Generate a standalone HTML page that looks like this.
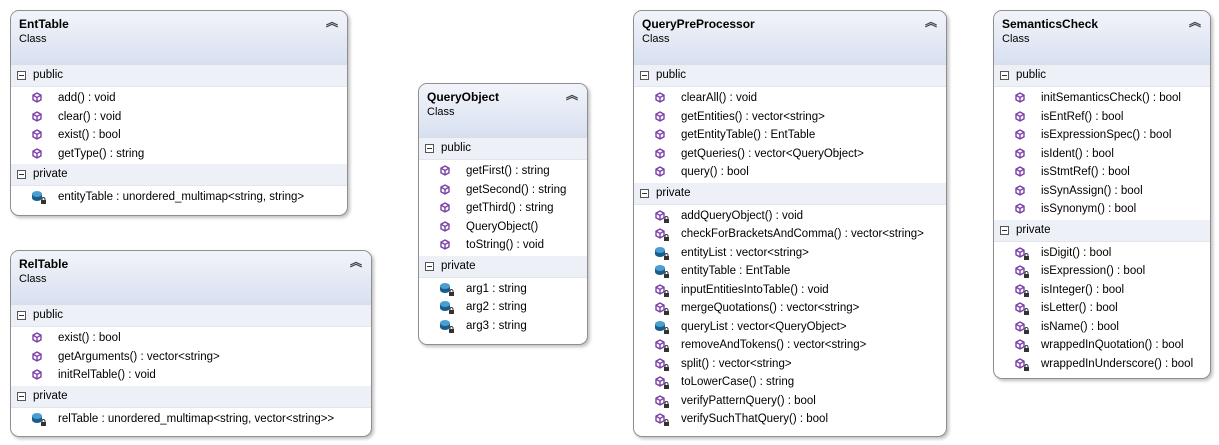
<!DOCTYPE html><html><head><meta charset="utf-8"><style>
body{margin:0;width:1219px;height:445px;background:#fff;position:relative;overflow:hidden;font-family:"Liberation Sans",sans-serif;font-size:11.5px;color:#000}
.b{position:absolute;border:1px solid #8f8f8f;border-radius:9px;background:#fff;box-shadow:2px 2px 3px rgba(0,0,0,.25);overflow:hidden}
.h{height:53px;background:linear-gradient(#f2f4fa,#d8e0f0);border-bottom:1px solid #d8dde8;position:relative}
.t{position:absolute;left:8px;top:6px;font-weight:bold;font-size:12px}
.c{position:absolute;left:8px;top:22px;font-size:11px}
.ch{position:absolute;right:9px;top:2px;font-size:12px;color:#444;font-weight:bold}
.s{height:21px;line-height:21px;background:#edf0f7;border-bottom:1px solid #e2e5ec;padding-left:22px;position:relative}
.s:before{content:"";position:absolute;left:6px;top:6px;width:7px;height:7px;border:1px solid #555;background:#fff}
.s:after{content:"";position:absolute;left:8px;top:10px;width:5px;height:1px;background:#333}
.l{padding:2px 0 1px}
.r{height:18.5px;line-height:18.5px;padding-left:47px;position:relative;white-space:nowrap}
.r svg{position:absolute;left:20px;top:2px}
</style></head><body>
<svg width="0" height="0" style="position:absolute"><defs>
<g id="m"><path d="M6 2L10 4.2v4.6L6 11 2 8.8V4.2z M2 4.2L6 6.5 10 4.2 M6 6.5V11" fill="none" stroke="#7b3fa8" stroke-width="1.4"/></g>
<g id="f"><ellipse cx="6" cy="8" rx="5" ry="3" fill="#1a5d8c"/><rect x="1" y="4" width="10" height="4" fill="#1a5d8c"/><ellipse cx="6" cy="4" rx="5" ry="3" fill="#4a9ed0"/></g>
<g id="k"><rect x="10" y="10" width="5" height="4" fill="#333"/><path d="M11 10.5v-1.5a1.5 1.5 0 0 1 3 0v1.5" fill="none" stroke="#333"/></g>
</defs></svg>

<div class="b" style="left:10px;top:10px;width:336px;height:204px">
<div class="h"><div class="t">EntTable</div><div class="c">Class</div><div class="ch">︽</div></div>
<div class="s">public</div><div class="l">
<div class="r"><svg width="16" height="15"><use href="#m"/></svg>add() : void</div>
<div class="r"><svg width="16" height="15"><use href="#m"/></svg>clear() : void</div>
<div class="r"><svg width="16" height="15"><use href="#m"/></svg>exist() : bool</div>
<div class="r"><svg width="16" height="15"><use href="#m"/></svg>getType() : string</div></div>
<div class="s">private</div><div class="l">
<div class="r"><svg width="16" height="15"><use href="#f"/><use href="#k"/></svg>entityTable : unordered_multimap&lt;string, string&gt;</div></div>
</div>

<div class="b" style="left:10px;top:250px;width:360px;height:185px">
<div class="h"><div class="t">RelTable</div><div class="c">Class</div><div class="ch">︽</div></div>
<div class="s">public</div><div class="l">
<div class="r"><svg width="16" height="15"><use href="#m"/></svg>exist() : bool</div>
<div class="r"><svg width="16" height="15"><use href="#m"/></svg>getArguments() : vector&lt;string&gt;</div>
<div class="r"><svg width="16" height="15"><use href="#m"/></svg>initRelTable() : void</div></div>
<div class="s">private</div><div class="l">
<div class="r"><svg width="16" height="15"><use href="#f"/><use href="#k"/></svg>relTable : unordered_multimap&lt;string, vector&lt;string&gt;&gt;</div></div>
</div>

<div class="b" style="left:418px;top:83px;width:168px;height:260px">
<div class="h"><div class="t">QueryObject</div><div class="c">Class</div><div class="ch">︽</div></div>
<div class="s">public</div><div class="l">
<div class="r"><svg width="16" height="15"><use href="#m"/></svg>getFirst() : string</div>
<div class="r"><svg width="16" height="15"><use href="#m"/></svg>getSecond() : string</div>
<div class="r"><svg width="16" height="15"><use href="#m"/></svg>getThird() : string</div>
<div class="r"><svg width="16" height="15"><use href="#m"/></svg>QueryObject()</div>
<div class="r"><svg width="16" height="15"><use href="#m"/></svg>toString() : void</div></div>
<div class="s">private</div><div class="l">
<div class="r"><svg width="16" height="15"><use href="#f"/><use href="#k"/></svg>arg1 : string</div>
<div class="r"><svg width="16" height="15"><use href="#f"/><use href="#k"/></svg>arg2 : string</div>
<div class="r"><svg width="16" height="15"><use href="#f"/><use href="#k"/></svg>arg3 : string</div></div>
</div>

<div class="b" style="left:633px;top:10px;width:312px;height:425px">
<div class="h"><div class="t">QueryPreProcessor</div><div class="c">Class</div><div class="ch">︽</div></div>
<div class="s">public</div><div class="l">
<div class="r"><svg width="16" height="15"><use href="#m"/></svg>clearAll() : void</div>
<div class="r"><svg width="16" height="15"><use href="#m"/></svg>getEntities() : vector&lt;string&gt;</div>
<div class="r"><svg width="16" height="15"><use href="#m"/></svg>getEntityTable() : EntTable</div>
<div class="r"><svg width="16" height="15"><use href="#m"/></svg>getQueries() : vector&lt;QueryObject&gt;</div>
<div class="r"><svg width="16" height="15"><use href="#m"/></svg>query() : bool</div></div>
<div class="s">private</div><div class="l">
<div class="r"><svg width="16" height="15"><use href="#m"/><use href="#k"/></svg>addQueryObject() : void</div>
<div class="r"><svg width="16" height="15"><use href="#m"/><use href="#k"/></svg>checkForBracketsAndComma() : vector&lt;string&gt;</div>
<div class="r"><svg width="16" height="15"><use href="#f"/><use href="#k"/></svg>entityList : vector&lt;string&gt;</div>
<div class="r"><svg width="16" height="15"><use href="#f"/><use href="#k"/></svg>entityTable : EntTable</div>
<div class="r"><svg width="16" height="15"><use href="#m"/><use href="#k"/></svg>inputEntitiesIntoTable() : void</div>
<div class="r"><svg width="16" height="15"><use href="#m"/><use href="#k"/></svg>mergeQuotations() : vector&lt;string&gt;</div>
<div class="r"><svg width="16" height="15"><use href="#f"/><use href="#k"/></svg>queryList : vector&lt;QueryObject&gt;</div>
<div class="r"><svg width="16" height="15"><use href="#m"/><use href="#k"/></svg>removeAndTokens() : vector&lt;string&gt;</div>
<div class="r"><svg width="16" height="15"><use href="#m"/><use href="#k"/></svg>split() : vector&lt;string&gt;</div>
<div class="r"><svg width="16" height="15"><use href="#m"/><use href="#k"/></svg>toLowerCase() : string</div>
<div class="r"><svg width="16" height="15"><use href="#m"/><use href="#k"/></svg>verifyPatternQuery() : bool</div>
<div class="r"><svg width="16" height="15"><use href="#m"/><use href="#k"/></svg>verifySuchThatQuery() : bool</div></div>
</div>

<div class="b" style="left:993px;top:10px;width:216px;height:367px">
<div class="h"><div class="t">SemanticsCheck</div><div class="c">Class</div><div class="ch">︽</div></div>
<div class="s">public</div><div class="l">
<div class="r"><svg width="16" height="15"><use href="#m"/></svg>initSemanticsCheck() : bool</div>
<div class="r"><svg width="16" height="15"><use href="#m"/></svg>isEntRef() : bool</div>
<div class="r"><svg width="16" height="15"><use href="#m"/></svg>isExpressionSpec() : bool</div>
<div class="r"><svg width="16" height="15"><use href="#m"/></svg>isIdent() : bool</div>
<div class="r"><svg width="16" height="15"><use href="#m"/></svg>isStmtRef() : bool</div>
<div class="r"><svg width="16" height="15"><use href="#m"/></svg>isSynAssign() : bool</div>
<div class="r"><svg width="16" height="15"><use href="#m"/></svg>isSynonym() : bool</div></div>
<div class="s">private</div><div class="l">
<div class="r"><svg width="16" height="15"><use href="#m"/><use href="#k"/></svg>isDigit() : bool</div>
<div class="r"><svg width="16" height="15"><use href="#m"/><use href="#k"/></svg>isExpression() : bool</div>
<div class="r"><svg width="16" height="15"><use href="#m"/><use href="#k"/></svg>isInteger() : bool</div>
<div class="r"><svg width="16" height="15"><use href="#m"/><use href="#k"/></svg>isLetter() : bool</div>
<div class="r"><svg width="16" height="15"><use href="#m"/><use href="#k"/></svg>isName() : bool</div>
<div class="r"><svg width="16" height="15"><use href="#m"/><use href="#k"/></svg>wrappedInQuotation() : bool</div>
<div class="r"><svg width="16" height="15"><use href="#m"/><use href="#k"/></svg>wrappedInUnderscore() : bool</div></div>
</div>
</body></html>
